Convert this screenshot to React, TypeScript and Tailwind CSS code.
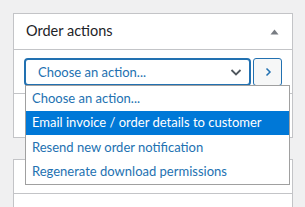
const options = [
  'Choose an action...',
  'Email invoice / order details to customer',
  'Resend new order notification',
  'Regenerate download permissions',
];

export default function App() {
  const selected = 1;

  return (
    <div className="min-h-screen bg-[#f0f0f1] pt-[13px] pl-[13px] font-['Lato',sans-serif] text-[#1d2327]">
      <div className="w-[280px] border border-[#c3c4c7] bg-white">
        <div className="flex h-[36px] items-center justify-between border-b border-[#c3c4c7] pl-[12px] pr-[13px]">
          <h2 className="text-[14.5px] leading-none">Order actions</h2>
          <svg width="9" height="6" viewBox="0 0 9 6" className="text-[#787c82]">
            <path d="M4.5 0.5 L8.5 5.5 L0.5 5.5 Z" fill="currentColor" />
          </svg>
        </div>

        <div className="border-b border-[#c3c4c7] px-[10px] pt-[8px] pb-[7px]">
          <div className="relative flex h-[28px] gap-[2px]">
            <div className="flex flex-1 items-center justify-between rounded-[4px] border-2 border-[#2271b1] pl-[12px] pr-[6px]">
              <span className="whitespace-nowrap text-[13px] leading-none text-[#2271b1]">Choose an action...</span>
              <svg width="14" height="14" viewBox="0 0 14 14" className="text-[#50575e]">
                <path d="M2.5 5 L7 9.5 L11.5 5" fill="none" stroke="currentColor" strokeWidth="1.8" />
              </svg>
            </div>
            <button className="flex w-[29px] items-center justify-center rounded-[3px] border border-[#2271b1] bg-[#f6f7f7] text-[#2271b1]">
              <svg width="8" height="10" viewBox="0 0 8 10">
                <path d="M2.5 1.5 L6 5 L2.5 8.5" fill="none" stroke="currentColor" strokeWidth="1.5" />
              </svg>
            </button>

            <ul className="absolute left-[1px] top-[27px] z-10 w-[265px] border border-[#a0a0a0] bg-white">
              {options.map((o, i) => (
                <li
                  key={o}
                  className={
                    i === selected
                      ? 'flex h-[24.5px] items-center whitespace-nowrap bg-[#0078d7] pl-[6px] text-[13px] text-white'
                      : 'flex h-[24.5px] items-center whitespace-nowrap pl-[6px] text-[13px] text-[#2271b1]'
                  }
                >
                  {o}
                </li>
              ))}
            </ul>
          </div>
        </div>

        <div className="h-[43px]" />
      </div>

      <div className="mt-[21px] w-[280px] border border-[#c3c4c7] bg-white">
        <div className="h-[34px] border-b border-[#c3c4c7]" />
        <div className="h-[20px]" />
      </div>
    </div>
  );
}
